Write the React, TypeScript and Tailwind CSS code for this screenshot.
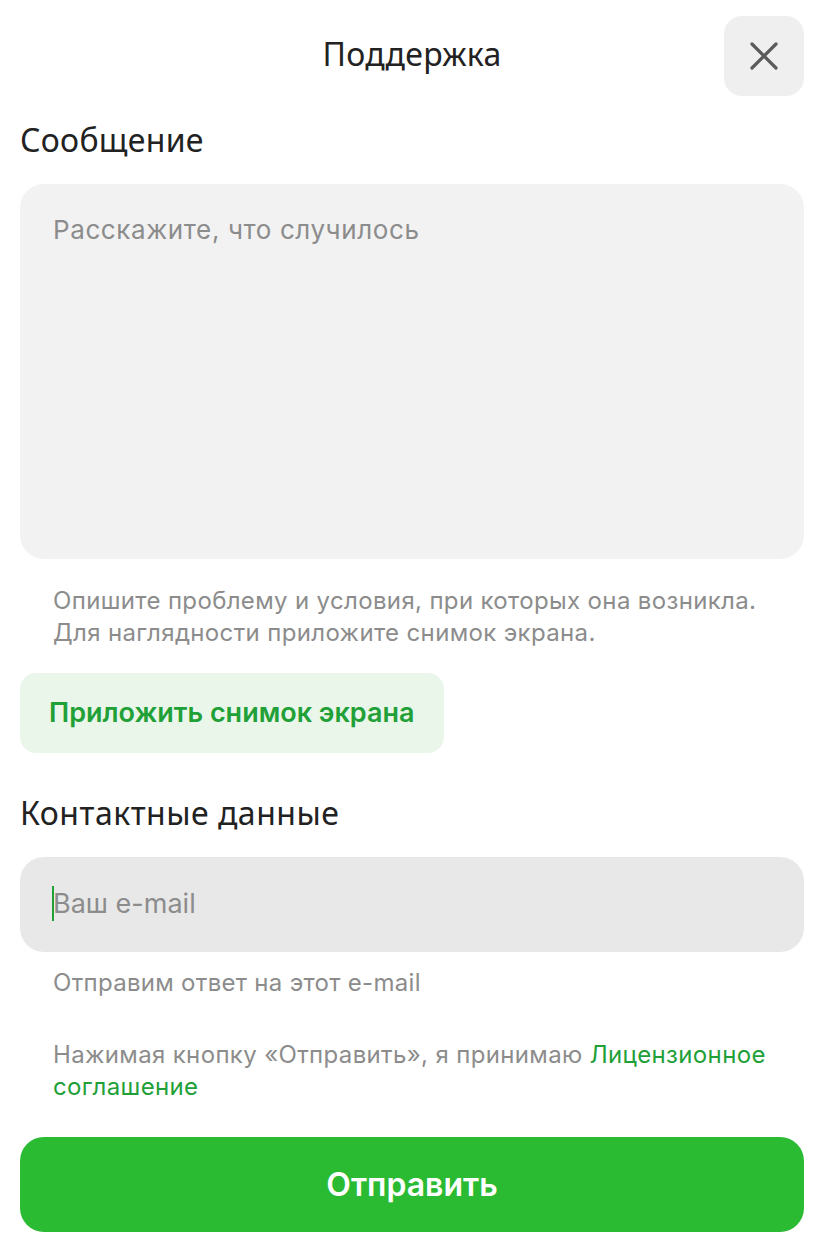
import { useState } from "react";

const body = "font-['Inter','Noto_Sans',sans-serif]";
const head = "font-['Noto_Sans','Open_Sans',sans-serif]";

function CloseIcon() {
  return (
    <svg width="28" height="28" viewBox="0 0 28 28" fill="none">
      <path
        d="M2 2L26 26M26 2L2 26"
        stroke="#5b5b5b"
        strokeWidth="3.2"
        strokeLinecap="round"
      />
    </svg>
  );
}

export default function App() {
  const [message, setMessage] = useState("");
  const [email, setEmail] = useState("");

  return (
    <div className={`min-h-[1252px] w-[824px] bg-white px-5 ${body}`}>
      <header className="relative flex h-[112px] items-start justify-center pt-[16px]">
        <h1
          className={`mt-[18px] text-[32px] leading-[40px] tracking-[0.3px] text-[#222] ${head}`}
        >
          Поддержка
        </h1>
        <button
          type="button"
          className="absolute right-0 top-[16px] flex h-20 w-20 items-center justify-center rounded-[18px] bg-[#efefef]"
        >
          <CloseIcon />
        </button>
      </header>

      <section>
        <h2
          className={`mt-[8px] text-[32px] leading-[40px] tracking-[0.3px] text-[#222] ${head}`}
        >
          Сообщение
        </h2>
        <textarea
          value={message}
          onChange={(e) => setMessage(e.target.value)}
          placeholder="Расскажите, что случилось"
          className="mt-[24px] block h-[375px] w-full resize-none rounded-[24px] bg-[#f2f2f2] px-[33px] pt-[30px] text-[26px] leading-[32px] tracking-[0.6px] text-[#222] outline-none placeholder:text-[#8c8c8c]"
        />
        <p className="mt-[26px] px-[33px] text-[24px] leading-[32px] tracking-[0.35px] text-[#8c8c8c]">
          Опишите проблему и условия, при которых она возникла.
          <br />
          Для наглядности приложите снимок экрана.
        </p>
        <button
          type="button"
          className="mt-[24px] flex h-20 items-center rounded-[16px] bg-[#ebf6eb] px-[29px] text-[27px] font-semibold text-[#21a038]"
        >
          Приложить снимок экрана
        </button>
      </section>

      <section className="mt-[40px]">
        <h2
          className={`text-[32px] leading-[40px] tracking-[0.5px] text-[#222] ${head}`}
        >
          Контактные данные
        </h2>
        <div className="relative mt-[24px] flex h-[95px] items-center rounded-[24px] bg-[#e8e8e8] px-[33px]">
          <span className="absolute left-[32px] top-[29px] h-[35px] w-[2px] bg-[#21a038]" />
          <input
            value={email}
            onChange={(e) => setEmail(e.target.value)}
            placeholder="Ваш e-mail"
            className="w-full bg-transparent text-[27px] text-[#222] caret-[#21a038] outline-none placeholder:text-[#8c8c8c]"
          />
        </div>
        <p className="mt-[15px] px-[33px] text-[24px] leading-[32px] tracking-[0.3px] text-[#8c8c8c]">
          Отправим ответ на этот e-mail
        </p>
        <p className="mt-[40px] px-[33px] text-[24px] leading-[32px] tracking-[0.35px] text-[#8c8c8c]">
          Нажимая кнопку «Отправить», я принимаю{" "}
          <a href="#" className="text-[#21a038]">
            Лицензионное
          </a>{" "}
          <a href="#" className="text-[#21a038]">
            соглашение
          </a>
        </p>
      </section>

      <button
        type="button"
        className="mt-[34px] flex h-[95px] w-full items-center justify-center rounded-[24px] bg-[#2bbb33] text-[32px] font-semibold text-white"
      >
        Отправить
      </button>
    </div>
  );
}
